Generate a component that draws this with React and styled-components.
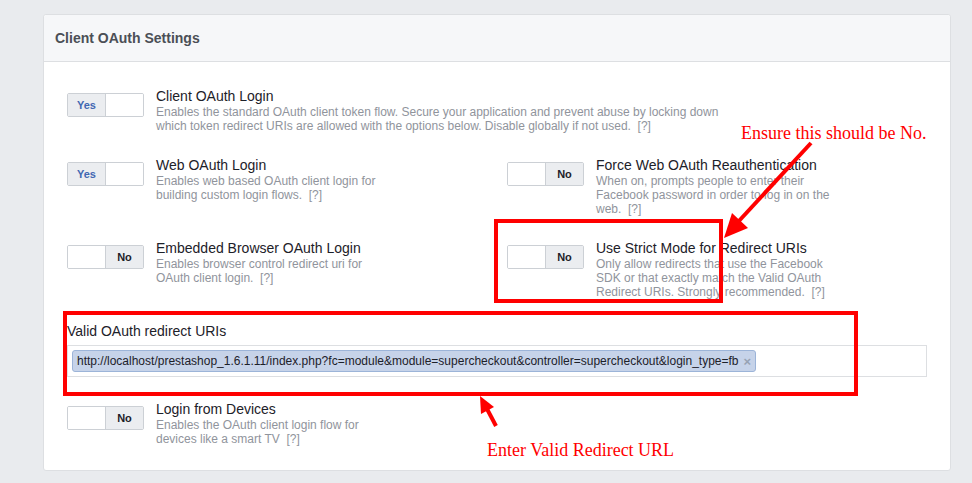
import styled, { createGlobalStyle } from "styled-components";

const GlobalStyle = createGlobalStyle`
  body {
    margin: 0;
    background-color: #e9ebee;
    font-family: "Liberation Sans", Arial, Helvetica, sans-serif;
  }
`;

const Page = styled.div`
  position: relative;
  width: 972px;
  height: 483px;
  overflow: hidden;
  padding-top: 14px;
  box-sizing: border-box;
`;

const Card = styled.section`
  margin-left: 43px;
  width: 908px;
  background-color: white;
  border: 1px solid #dddfe2;
  border-radius: 3px;
  box-sizing: border-box;
`;

const CardHeader = styled.header`
  display: flex;
  align-items: center;
  height: 46px;
  padding-left: 11px;
  background-color: #f6f7f9;
  border-bottom: 1px solid #dddfe2;
  border-radius: 3px 3px 0 0;
  font-size: 14px;
  font-weight: bold;
  color: #4b4f56;
`;

const CardBody = styled.div`
  display: grid;
  grid-template-columns: 440px 1fr;
  row-gap: 23px;
  padding: 25px 23px 24px 23px;
`;

const SettingRow = styled.div`
  display: flex;
  gap: 12px;
  grid-column: ${(p) => (p.$wide ? "1 / -1" : "auto")};
`;

const Toggle = styled.div`
  display: flex;
  flex-shrink: 0;
  width: 77px;
  height: 24px;
  margin-top: 6px;
  border: 1px solid #ccd0d5;
  border-radius: 2px;
  box-sizing: border-box;
  overflow: hidden;
`;

const ToggleHalf = styled.div`
  flex: 1;
  display: flex;
  align-items: center;
  justify-content: center;
  font-size: 11px;
  font-weight: bold;
  color: ${(p) => (p.$yes ? "#4267b2" : "#1d2129")};
  background-color: ${(p) => (p.$active ? "#ebedf0" : "white")};
  & + & {
    border-left: 1px solid #ccd0d5;
  }
`;

const SettingText = styled.div`
  max-width: ${(p) => (p.$wide ? "570px" : "240px")};
`;

const SettingTitle = styled.div`
  font-size: 14px;
  line-height: 18px;
  color: #1d2129;
`;

const SettingDesc = styled.div`
  font-size: 12px;
  line-height: 14px;
  color: #90949c;
`;

const UriField = styled.div`
  grid-column: 1 / -1;
`;

const UriLabel = styled.div`
  font-size: 14px;
  line-height: 18px;
  color: #1d2129;
  margin-bottom: 5px;
`;

const UriBox = styled.div`
  display: flex;
  align-items: center;
  height: 32px;
  padding: 0 4px;
  border: 1px solid #dddfe2;
  box-sizing: border-box;
`;

const Token = styled.span`
  display: inline-flex;
  align-items: center;
  gap: 5px;
  height: 22px;
  padding: 0 4px 0 4px;
  background-color: #c6d3e9;
  border: 1px solid #9cb4d8;
  border-radius: 3px;
  box-sizing: border-box;
  font-size: 12px;
  color: #1d2129;
`;

const TokenClose = styled.span`
  font-size: 13px;
  font-weight: bold;
  color: #97a2b3;
`;

const RedBox = styled.div`
  position: absolute;
  left: ${(p) => p.$x}px;
  top: ${(p) => p.$y}px;
  width: ${(p) => p.$w}px;
  height: ${(p) => p.$h}px;
  border: 4px solid #ff0000;
  box-sizing: border-box;
  pointer-events: none;
`;

const Note = styled.div`
  position: absolute;
  left: ${(p) => p.$x}px;
  top: ${(p) => p.$y}px;
  font-family: "Liberation Serif", "Times New Roman", serif;
  font-size: 18px;
  line-height: 18px;
  color: #ff0000;
  white-space: nowrap;
`;

const ArrowLayer = styled.svg`
  position: absolute;
  left: 0;
  top: 0;
  pointer-events: none;
`;

function Setting({ title, desc, on, wide }) {
  return (
    <SettingRow $wide={wide}>
      <Toggle>
        <ToggleHalf $yes $active={on}>{on ? "Yes" : ""}</ToggleHalf>
        <ToggleHalf $active={!on}>{on ? "" : "No"}</ToggleHalf>
      </Toggle>
      <SettingText $wide={wide}>
        <SettingTitle>{title}</SettingTitle>
        <SettingDesc>{`${desc}\u00a0 [?]`}</SettingDesc>
      </SettingText>
    </SettingRow>
  );
}

export default function App() {
  return (
    <Page>
      <GlobalStyle />
      <Card>
        <CardHeader>Client OAuth Settings</CardHeader>
        <CardBody>
          <Setting
            wide
            on
            title="Client OAuth Login"
            desc="Enables the standard OAuth client token flow. Secure your application and prevent abuse by locking down which token redirect URIs are allowed with the options below. Disable globally if not used."
          />
          <Setting
            on
            title="Web OAuth Login"
            desc="Enables web based OAuth client login for building custom login flows."
          />
          <Setting
            title="Force Web OAuth Reauthentication"
            desc="When on, prompts people to enter their Facebook password in order to log in on the web."
          />
          <Setting
            title="Embedded Browser OAuth Login"
            desc="Enables browser control redirect uri for OAuth client login."
          />
          <Setting
            title="Use Strict Mode for Redirect URIs"
            desc="Only allow redirects that use the Facebook SDK or that exactly match the Valid OAuth Redirect URIs. Strongly recommended."
          />
          <UriField>
            <UriLabel>Valid OAuth redirect URIs</UriLabel>
            <UriBox>
              <Token>
                http://localhost/prestashop_1.6.1.11/index.php?fc=module&amp;module=supercheckout&amp;controller=supercheckout&amp;login_type=fb
                <TokenClose>×</TokenClose>
              </Token>
            </UriBox>
          </UriField>
          <Setting
            title="Login from Devices"
            desc="Enables the OAuth client login flow for devices like a smart TV"
          />
        </CardBody>
      </Card>

      <RedBox $x={494} $y={219} $w={229} $h={84} />
      <RedBox $x={63} $y={311} $w={795} $h={85} />
      <Note $x={741} $y={124}>Ensure this should be No.</Note>
      <Note $x={487} $y={441}>Enter Valid Redirect URL</Note>
      <ArrowLayer width="972" height="483">
        <line x1="811" y1="143" x2="738" y2="222" stroke="#ff0000" strokeWidth="4" />
        <polygon points="724,238 732,213 748,228" fill="#ff0000" />
        <line x1="496" y1="426" x2="486" y2="407" stroke="#ff0000" strokeWidth="4" />
        <polygon points="480,396 481,414 494,407" fill="#ff0000" />
      </ArrowLayer>
    </Page>
  );
}
